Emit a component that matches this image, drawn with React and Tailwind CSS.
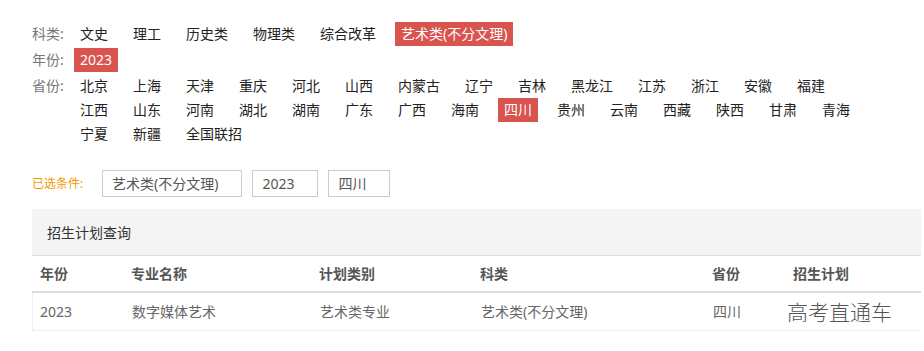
import React from "react";

const subjects = ["文史", "理工", "历史类", "物理类", "综合改革", "艺术类(不分文理)"];
const provinces = [
  "北京", "上海", "天津", "重庆", "河北", "山西", "内蒙古", "辽宁", "吉林", "黑龙江", "江苏", "浙江", "安徽", "福建",
  "江西", "山东", "河南", "湖北", "湖南", "广东", "广西", "海南", "四川", "贵州", "云南", "西藏", "陕西", "甘肃", "青海",
  "宁夏", "新疆", "全国联招",
];

function Item({ text, active }) {
  return (
    <span
      className={
        active
          ? "h-[24px] px-[6px] mr-[13px] leading-[24px] bg-[#d9534f] text-white whitespace-nowrap"
          : "h-[24px] px-[6px] mr-[13px] leading-[24px] text-[#222] whitespace-nowrap"
      }
    >
      {text}
    </span>
  );
}

function FilterRow({ label, children }) {
  return (
    <div className="flex items-start">
      <span className="w-[42px] shrink-0 leading-[24px] text-[#777]">{label}</span>
      <div className="flex flex-wrap w-[808px]">{children}</div>
    </div>
  );
}

export default function App() {
  return (
    <div className="w-[924px] h-[351px] overflow-hidden bg-white pl-[32px] pt-[22px] text-[14px] font-['Noto_Sans','Noto_Sans_CJK_SC',sans-serif]">
      <div className="flex flex-col gap-[2px]">
        <FilterRow label="科类:">
          {subjects.map((s) => (
            <Item key={s} text={s} active={s === "艺术类(不分文理)"} />
          ))}
        </FilterRow>
        <FilterRow label="年份:">
          <Item text="2023" active />
        </FilterRow>
        <FilterRow label="省份:">
          {provinces.map((p) => (
            <Item key={p} text={p} active={p === "四川"} />
          ))}
        </FilterRow>
      </div>

      <div className="mt-[24px] flex items-center h-[27px]">
        <span className="w-[70px] shrink-0 text-[12px] text-[#f39800]">已选条件:</span>
        {["艺术类(不分文理)", "2023", "四川"].map((t) => (
          <span
            key={t}
            className="h-[27px] border border-[#cccccc] pl-[9px] pr-[23px] mr-[10px] leading-[25px] text-[#555] whitespace-nowrap"
          >
            {t}
          </span>
        ))}
      </div>

      <div className="mt-[12px] w-[889px]">
        <div className="h-[47px] bg-[#f4f4f4] border-b border-[#dddddd] px-[15px] flex items-center text-[#333]">
          招生计划查询
        </div>
        <div className="grid grid-cols-[91px_188px_161px_232px_81px_1fr] h-[37px] border-b-2 border-[#dddddd] items-center font-bold text-[#555]">
          <span className="pl-[8px]">年份</span>
          <span className="pl-[8px]">专业名称</span>
          <span className="pl-[8px]">计划类别</span>
          <span className="pl-[8px]">科类</span>
          <span className="pl-[8px]">省份</span>
          <span className="pl-[8px]">招生计划</span>
        </div>
        <div className="grid grid-cols-[91px_188px_161px_232px_81px_1fr] h-[38px] border-b border-l border-[#eeeeee] items-center text-[#666]">
          <span className="pl-[7px]">2023</span>
          <span className="pl-[8px]">数字媒体艺术</span>
          <span className="pl-[8px]">艺术类专业</span>
          <span className="pl-[8px]">艺术类(不分文理)</span>
          <span className="pl-[8px]">四川</span>
          <span className="pl-[1px] text-[21px] leading-[24px] font-light text-[#555] whitespace-nowrap">高考直通车</span>
        </div>
      </div>
    </div>
  );
}
